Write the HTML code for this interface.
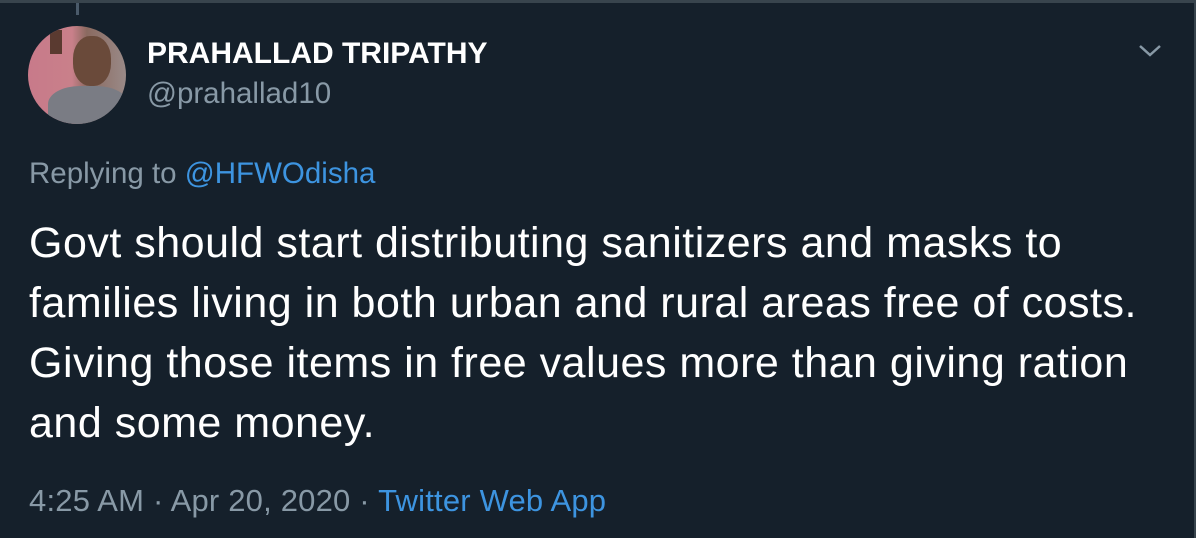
<html><head><style>
body{margin:0;width:1196px;height:538px;background:#15202b;overflow:hidden;font-family:"Liberation Sans",Arial,sans-serif;position:relative}
.t{position:absolute;white-space:nowrap}
</style></head><body>
<div style="position:absolute;left:0;top:0;width:1196px;height:3px;background:#38444d"></div>
<div style="position:absolute;right:0;top:0;width:2px;height:538px;background:#38444d"></div>
<div style="position:absolute;left:76px;top:3px;width:3px;height:12px;background:#4a5a6a"></div>
<div style="position:absolute;left:28px;top:26px;width:98px;height:98px;border-radius:50%;overflow:hidden;background:linear-gradient(90deg,#c87a8a 0%,#c9808a 45%,#8a6a60 60%,#9a8a88 100%)">
<div style="position:absolute;left:45px;top:10px;width:38px;height:50px;border-radius:45%;background:#6a4a3a"></div>
<div style="position:absolute;left:20px;top:60px;width:80px;height:45px;border-radius:40% 40% 0 0;background:#7a7c84"></div>
<div style="position:absolute;left:22px;top:4px;width:12px;height:24px;background:#5a3a30"></div>
</div>
<div class="t" style="left:147px;top:37px;font-size:30px;font-weight:bold;color:#fff">PRAHALLAD TRIPATHY</div>
<div class="t" style="left:147px;top:77px;font-size:29.5px;color:#8899a6">@prahallad10</div>
<svg style="position:absolute;left:1138px;top:44px" width="24" height="14" viewBox="0 0 24 14"><path d="M2 2 L12 11 L22 2" fill="none" stroke="#8899a6" stroke-width="2.5"/></svg>
<div class="t" style="left:29px;top:157px;font-size:29.5px;color:#8899a6">Replying to <span style="color:#3d94e0">@HFWOdisha</span></div>
<div class="t" style="left:29px;top:213px;font-size:43px;line-height:60px;letter-spacing:0.5px;color:#fff">Govt should start distributing sanitizers and masks to<br>families living in both urban and rural areas free of costs.<br>Giving those items in free values more than giving ration<br>and some money.</div>
<div class="t" style="left:29px;top:483px;font-size:31px;letter-spacing:0.2px;color:#8899a6">4:25 AM · Apr 20, 2020 · <span style="color:#3d94e0">Twitter Web App</span></div>
</body></html>
